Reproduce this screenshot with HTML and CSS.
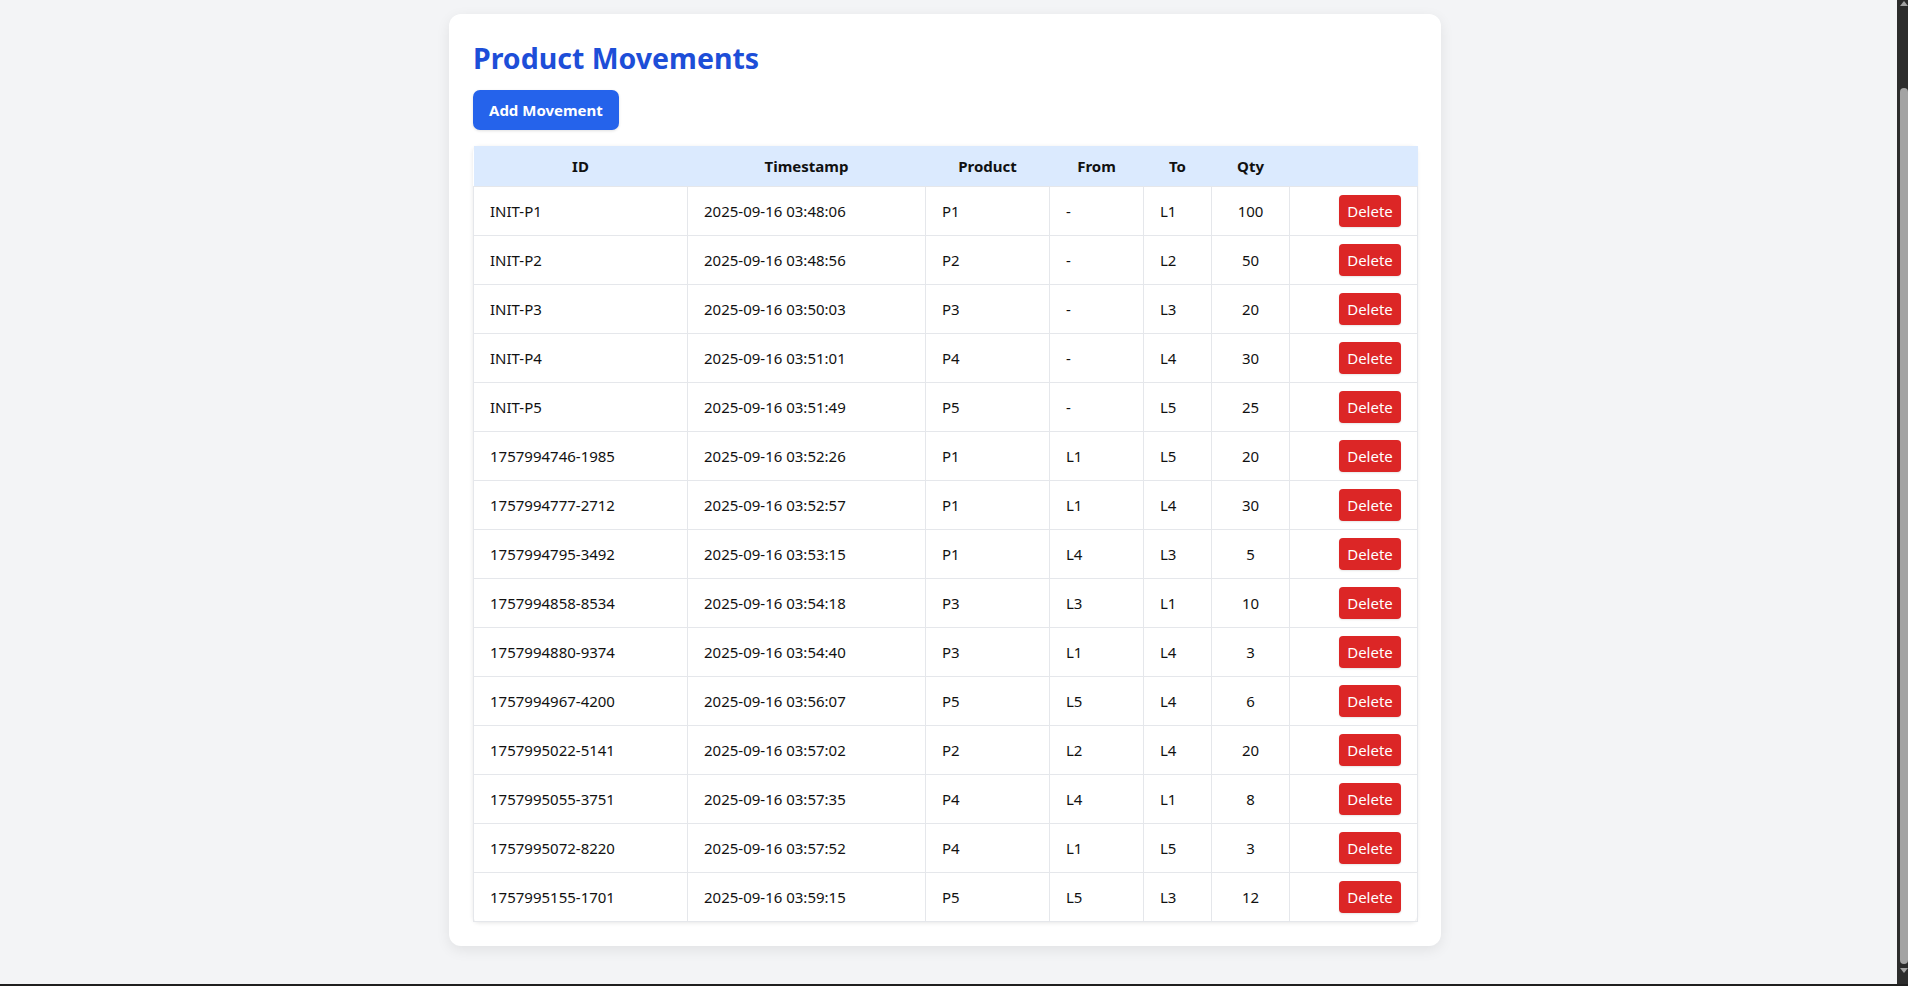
FILE: index.html
```html
<!DOCTYPE html>
<html lang="en">
<head>
<meta charset="utf-8">
<title>Product Movements</title>
<link rel="stylesheet" href="styles.css">
</head>
<body>
<div class="page">
  <main class="card">
    <h2 class="title">Product Movements</h2>
    <button class="btn-add">Add Movement</button>
    <div class="table-wrap">
      <table class="moves">
        <colgroup>
          <col class="c-id"><col class="c-ts"><col class="c-prod"><col class="c-from"><col class="c-to"><col class="c-qty"><col class="c-act">
        </colgroup>
        <thead>
          <tr><th>ID</th><th>Timestamp</th><th>Product</th><th>From</th><th>To</th><th>Qty</th><th></th></tr>
        </thead>
        <tbody>
          <tr><td>INIT-P1</td><td>2025-09-16 03:48:06</td><td>P1</td><td>-</td><td>L1</td><td class="qty">100</td><td class="act"><button class="btn-del">Delete</button></td></tr>
          <tr><td>INIT-P2</td><td>2025-09-16 03:48:56</td><td>P2</td><td>-</td><td>L2</td><td class="qty">50</td><td class="act"><button class="btn-del">Delete</button></td></tr>
          <tr><td>INIT-P3</td><td>2025-09-16 03:50:03</td><td>P3</td><td>-</td><td>L3</td><td class="qty">20</td><td class="act"><button class="btn-del">Delete</button></td></tr>
          <tr><td>INIT-P4</td><td>2025-09-16 03:51:01</td><td>P4</td><td>-</td><td>L4</td><td class="qty">30</td><td class="act"><button class="btn-del">Delete</button></td></tr>
          <tr><td>INIT-P5</td><td>2025-09-16 03:51:49</td><td>P5</td><td>-</td><td>L5</td><td class="qty">25</td><td class="act"><button class="btn-del">Delete</button></td></tr>
          <tr><td>1757994746-1985</td><td>2025-09-16 03:52:26</td><td>P1</td><td>L1</td><td>L5</td><td class="qty">20</td><td class="act"><button class="btn-del">Delete</button></td></tr>
          <tr><td>1757994777-2712</td><td>2025-09-16 03:52:57</td><td>P1</td><td>L1</td><td>L4</td><td class="qty">30</td><td class="act"><button class="btn-del">Delete</button></td></tr>
          <tr><td>1757994795-3492</td><td>2025-09-16 03:53:15</td><td>P1</td><td>L4</td><td>L3</td><td class="qty">5</td><td class="act"><button class="btn-del">Delete</button></td></tr>
          <tr><td>1757994858-8534</td><td>2025-09-16 03:54:18</td><td>P3</td><td>L3</td><td>L1</td><td class="qty">10</td><td class="act"><button class="btn-del">Delete</button></td></tr>
          <tr><td>1757994880-9374</td><td>2025-09-16 03:54:40</td><td>P3</td><td>L1</td><td>L4</td><td class="qty">3</td><td class="act"><button class="btn-del">Delete</button></td></tr>
          <tr><td>1757994967-4200</td><td>2025-09-16 03:56:07</td><td>P5</td><td>L5</td><td>L4</td><td class="qty">6</td><td class="act"><button class="btn-del">Delete</button></td></tr>
          <tr><td>1757995022-5141</td><td>2025-09-16 03:57:02</td><td>P2</td><td>L2</td><td>L4</td><td class="qty">20</td><td class="act"><button class="btn-del">Delete</button></td></tr>
          <tr><td>1757995055-3751</td><td>2025-09-16 03:57:35</td><td>P4</td><td>L4</td><td>L1</td><td class="qty">8</td><td class="act"><button class="btn-del">Delete</button></td></tr>
          <tr><td>1757995072-8220</td><td>2025-09-16 03:57:52</td><td>P4</td><td>L1</td><td>L5</td><td class="qty">3</td><td class="act"><button class="btn-del">Delete</button></td></tr>
          <tr><td>1757995155-1701</td><td>2025-09-16 03:59:15</td><td>P5</td><td>L5</td><td>L3</td><td class="qty">12</td><td class="act"><button class="btn-del">Delete</button></td></tr>
        </tbody>
      </table>
    </div>
  </main>
</div>
<div class="scrollbar" aria-hidden="true">
  <span class="sb-arrow sb-up"></span>
  <span class="sb-thumb"></span>
  <span class="sb-arrow sb-down"></span>
</div>
<div class="window-edge" aria-hidden="true"></div>
</body>
</html>
```

FILE: styles.css
```css
html, body {
  margin: 0;
  padding: 0;
  height: 100%;
  overflow: hidden;
}

body {
  background: #f3f4f6;
  font-family: "Segoe UI", "Noto Sans", "Open Sans", sans-serif;
  color: #111;
}

.page {
  display: flex;
  flex-direction: column;
  align-items: center;
  padding: 14px 18px 0 0;
}

.card {
  width: 992px;
  box-sizing: border-box;
  background: #fff;
  border-radius: 12px;
  padding: 24px;
  box-shadow: 0 4px 14px rgba(0, 0, 0, 0.08);
}

.title {
  margin: 0 0 12px 0;
  font-size: 28.5px;
  line-height: 40px;
  font-weight: 700;
  color: #1d4ed8;
}

.btn-add {
  display: block;
  height: 40px;
  padding: 0 16px;
  border: none;
  border-radius: 7px;
  background: #2563eb;
  color: #fff;
  font-family: inherit;
  font-size: 15px;
  font-weight: 700;
  box-shadow: 0 1px 3px rgba(0, 0, 0, 0.12);
  margin-bottom: 16px;
}

.table-wrap {
  border-radius: 6px;
  box-shadow: 0 1px 4px rgba(0, 0, 0, 0.1);
}

.moves {
  width: 944px;
  table-layout: fixed;
  border-collapse: collapse;
  font-size: 15px;
}

.c-id { width: 214px; }
.c-ts { width: 238px; }
.c-prod { width: 124px; }
.c-from { width: 94px; }
.c-to { width: 68px; }
.c-qty { width: 78px; }
.c-act { width: 128px; }

.moves th {
  background: #dbeafe;
  height: 40px;
  padding: 0 16px;
  font-weight: 700;
  text-align: center;
  border: none;
}

.moves td {
  height: 48px;
  padding: 0 16px;
  border: 1px solid #e5e7eb;
  vertical-align: middle;
  text-align: left;
  white-space: nowrap;
}

.moves td.qty {
  text-align: center;
}

.moves td.act {
  text-align: right;
}

.btn-del {
  height: 32px;
  width: 62px;
  padding: 0;
  border: none;
  border-radius: 4px;
  background: #dc2626;
  color: #fff;
  font-family: inherit;
  font-size: 15px;
  vertical-align: middle;
  box-shadow: 0 1px 2px rgba(0, 0, 0, 0.1);
}

.scrollbar {
  position: fixed;
  top: 0;
  right: 0;
  width: 11px;
  height: 984px;
  background: #2c2c2c;
}

.sb-thumb {
  position: absolute;
  left: 3px;
  right: 0;
  top: 88px;
  height: 876px;
  border-radius: 4px;
  background: #a3a3a3;
}

.sb-arrow {
  position: absolute;
  left: 3px;
  width: 0;
  height: 0;
  border-left: 4px solid transparent;
  border-right: 4px solid transparent;
}

.sb-up {
  top: 1px;
  border-bottom: 5px solid #a3a3a3;
}

.sb-down {
  top: 968px;
  border-top: 5px solid #a3a3a3;
}

.window-edge {
  position: fixed;
  left: 0;
  right: 0;
  bottom: 0;
  height: 2px;
  background: #1f1f1f;
}
```
